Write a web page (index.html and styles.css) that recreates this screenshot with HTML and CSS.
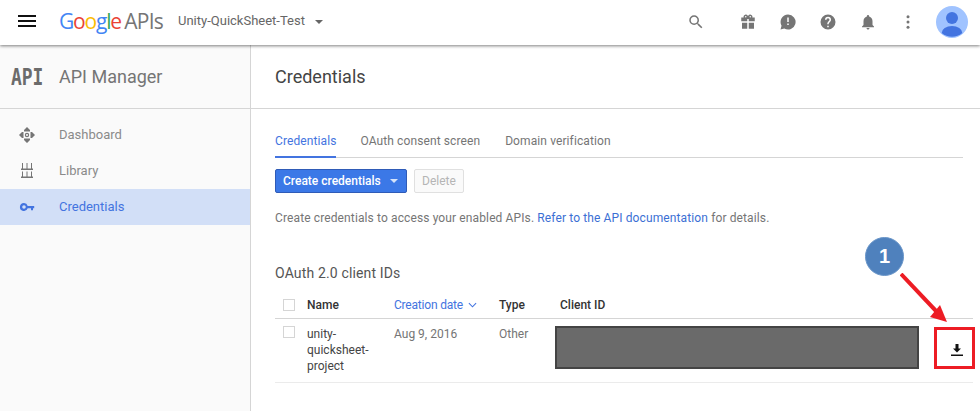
FILE: index.html
```html
<!DOCTYPE html>
<html lang="en">
  <head>
    <meta charset="UTF-8" />
    <title>Credentials - API Manager</title>
    <link rel="stylesheet" href="styles.css">
  </head>
  <body>
    <!-- Top bar -->
    <header class="topbar">
      <div class="burger"><span></span><span></span><span></span></div>
      <div class="logo">
        <span class="g-blue">G</span><span class="g-red">o</span><span class="g-yellow">o</span><span class="g-blue">g</span><span class="g-green">l</span><span class="g-red">e</span>
        <span class="logo-apis">APIs</span>
      </div>
      <div class="project">Unity-QuickSheet-Test</div>
      <div class="caret"></div>
      <div class="top-icons">
        <svg class="icon icon-search" viewBox="0 0 24 24"><path d="M15.500 14h-.79l-.28-.27A6.470 6.470 0 0 0 16 9.500 6.500 6.500 0 1 0 9.500 16c1.610 0 3.090-.59 4.230-1.570l.27.28v.79l5 4.990L20.490 19l-4.990-5zm-6 0C7.010 14 5 11.990 5 9.500S7.010 5 9.500 5 14 7.010 14 9.500 11.990 14 9.500 14z"/></svg>
        <svg class="icon icon-gift" viewBox="0 0 24 24"><path d="M20 6h-2.200c.1-.3.200-.7.200-1a3 3 0 0 0-5.500-1.600L12 4l-.5-.6A3 3 0 0 0 6 5c0 .3.100.7.200 1H3v5h8V8h2v3h8V6h-1zM9 6a1 1 0 1 1 0-2 1 1 0 0 1 0 2zm6 0a1 1 0 1 1 0-2 1 1 0 0 1 0 2zM4 13v8h7v-8H4zm9 0v8h7v-8h-7z"/></svg>
        <svg class="icon icon-feedback" viewBox="0 0 24 24"><path d="M12 2a10 10 0 0 0-8.600 15L2 22l5-1.400A10 10 0 1 0 12 2zm1 14h-2v-2h2v2zm0-4h-2V6h2v6z"/></svg>
        <svg class="icon icon-help" viewBox="0 0 24 24"><path d="M12 2a10 10 0 1 0 0 20 10 10 0 0 0 0-20zm1 17h-2v-2h2v2zm2.100-7.700-.9.900c-.7.700-1.200 1.300-1.200 2.800h-2v-.5c0-1.100.5-2.100 1.200-2.800l1.200-1.300c.4-.3.600-.8.600-1.400a2 2 0 0 0-4 0H8a4 4 0 0 1 8 0c0 .9-.4 1.700-.9 2.300z"/></svg>
        <svg class="icon icon-bell" viewBox="0 0 24 24"><path d="M12 22c1.100 0 2-.9 2-2h-4c0 1.100.9 2 2 2zm6-6v-5c0-3.100-1.600-5.600-4.500-6.300V4a1.500 1.500 0 0 0-3 0v.7C7.600 5.400 6 7.900 6 11v5l-2 2v1h16v-1l-2-2z"/></svg>
        <svg class="icon icon-more" viewBox="0 0 24 24"><circle cx="12" cy="5" r="2"/><circle cx="12" cy="12" r="2"/><circle cx="12" cy="19" r="2"/></svg>
      </div>
      <svg class="avatar" viewBox="0 0 32 32">
        <circle cx="16" cy="16" r="16" fill="#a0c3ff"/>
        <circle cx="16" cy="12" r="6" fill="#4374e0"/>
        <path d="M5.700 27a10.300 7 0 0 1 20.600 0 16 16 0 0 1-20.600 0z" fill="#4374e0"/>
      </svg>
    </header>

    <div class="page">
      <!-- Sidebar -->
      <aside class="sidebar">
        <div class="side-head">
          <div class="api-box"><span class="api-mark">API</span></div>
          <span class="side-title">API Manager</span>
        </div>
        <ul class="side-nav">
          <li>
            <svg class="nav-icon" viewBox="0 0 18 18"><path fill-rule="evenodd" d="M9 1l3 3v1.500H6V4zM9 17l-3-3v-1.500h6V14zM1 9l3-3h1.500v6H4zM17 9l-3 3h-1.500V6H14zM9 6.800a2.200 2.200 0 1 0 0 4.400 2.200 2.200 0 0 0 0-4.400zm0 1.200a1 1 0 1 1 0 2 1 1 0 0 1 0-2z"/></svg>
            <span class="nav-label">Dashboard</span>
          </li>
          <li>
            <svg class="nav-icon" viewBox="0 0 18 18"><path d="M4 1h1v5.500H4zM8.500 1h1v5.500h-1zM13 1h1v5.500h-1zM3 6.500h12V8H3zM4 9.500h1v5H4zM8.500 9.500h1v5h-1zM13 9.500h1v5h-1zM3 14.500h12V16H3z"/></svg>
            <span class="nav-label">Library</span>
          </li>
          <li class="active">
            <svg class="nav-icon" viewBox="0 0 18 18"><path fill-rule="evenodd" d="M6 5a4 4 0 1 0 3.700 5.300H13v2h2v-2h1.200V7.900H9.700A4 4 0 0 0 6 5zm0 2.200a1.800 1.800 0 1 1 0 3.600 1.800 1.800 0 0 1 0-3.600z"/></svg>
            <span class="nav-label">Credentials</span>
          </li>
        </ul>
      </aside>

      <!-- Main -->
      <main class="main">
        <h1 class="page-title">Credentials</h1>
        <div class="content">
          <nav class="tabs">
            <a class="tab tab-active">Credentials</a>
            <a class="tab">OAuth consent screen</a>
            <a class="tab tab-last">Domain verification</a>
          </nav>
          <div class="actions">
            <button class="btn btn-primary">Create credentials <i class="btn-caret"></i></button>
            <button class="btn btn-off">Delete</button>
          </div>
          <p class="intro">Create credentials to access your enabled APIs. <a>Refer to the API documentation</a> for details.</p>
          <h2 class="section-title">OAuth 2.0 client IDs</h2>
          <div class="table">
            <div class="row row-head">
              <div class="col-check"><span class="check"></span></div>
              <div class="col-name">Name</div>
              <div class="col-date sort">Creation date
                <svg class="sort-arrow" viewBox="0 0 10 6"><path d="M1 1l4 4 4-4" fill="none" stroke="#4374e0" stroke-width="1.200"/></svg>
              </div>
              <div class="col-type">Type</div>
              <div class="col-id">Client ID</div>
            </div>
            <div class="row row-body">
              <div class="col-check"><span class="check"></span></div>
              <div class="col-name">unity-quicksheet-project</div>
              <div class="col-date">Aug 9, 2016</div>
              <div class="col-type">Other</div>
              <div class="col-id"><div class="redacted"></div></div>
              <div class="col-dl">
                <svg class="dl-icon" viewBox="0 0 14 14"><path d="M11 5.500H8.500V1h-3v4.500H3L7 9.500zM1 11.500h12V13H1z"/></svg>
              </div>
            </div>
          </div>
        </div>
      </main>
    </div>

    <!-- Annotation over the screenshot -->
    <div class="callout">1</div>
    <svg class="arrow" viewBox="0 0 70 70"><path d="M1 1L37 39" stroke="#ed1c24" stroke-width="4" fill="none"/><path d="M47 49L30 44 40 32z" fill="#ed1c24"/></svg>
    <div class="red-box"></div>
  </body>
</html>
```

FILE: styles.css
```css
/* Basic Reset */
* {
  margin: 0;
  padding: 0;
  box-sizing: border-box;
}

body {
  font-family: Roboto, Arial, sans-serif;
  font-size: 13px;
  color: #757575;
  background-color: #fff;
  height: 411px;
  overflow: hidden;
  position: relative;
}

/* Top bar */
.topbar {
  height: 45px;
  padding-bottom: 4px;
  display: flex;
  align-items: center;
  background-color: #fff;
  box-shadow: 0 1px 3px rgba(0, 0, 0, 0.5);
  position: relative;
  z-index: 2;
}

.burger {
  width: 18px;
  margin-left: 18px;
  display: flex;
  flex-direction: column;
  gap: 3px;
}

.burger span {
  display: block;
  height: 2px;
  background-color: #111;
}

.logo {
  margin-left: 23px;
  font-family: "Open Sans", Arial, sans-serif;
  font-size: 21px;
  letter-spacing: -1.2px;
  white-space: nowrap;
  width: 119px;
}

.g-blue { color: #4285f4; }
.g-red { color: #ea4335; }
.g-yellow { color: #fbbc05; }
.g-green { color: #34a853; }

.logo-apis {
  color: #757575;
  letter-spacing: -0.7px;
  margin-left: -1px;
}

.project {
  color: #666;
  font-size: 13px;
  white-space: nowrap;
}

.caret {
  margin-left: 10px;
  margin-top: 2px;
  border-top: 4px solid #666;
  border-left: 4px solid transparent;
  border-right: 4px solid transparent;
}

.top-icons {
  margin-left: auto;
  margin-top: 2px;
  display: flex;
  align-items: center;
}

.icon {
  width: 18px;
  height: 18px;
  fill: #757575;
  display: block;
  margin-left: 22px;
}

.icon-search { margin-right: 12px; }

.avatar {
  width: 32px;
  height: 32px;
  margin-top: 2px;
  margin-left: 19px;
  margin-right: 12px;
}

/* Page */
.page {
  display: flex;
  height: 366px;
}

.sidebar {
  width: 251px;
  flex-shrink: 0;
  background-color: #fafafa;
  border-right: 1px solid #d5d5d5;
}

.side-head {
  height: 64px;
  display: flex;
  align-items: center;
  border-bottom: 1px solid #d5d5d5;
}

.api-box {
  width: 59px;
  padding-left: 11px;
}

.api-mark {
  display: block;
  font-family: "DejaVu Sans Mono", monospace;
  font-weight: bold;
  font-size: 23px;
  color: #6b6b6b;
  transform: scaleX(0.78);
  transform-origin: left center;
}

.side-title {
  font-size: 18px;
  color: #757575;
}

.side-nav {
  list-style: none;
  padding-top: 8px;
}

.side-nav li {
  height: 36px;
  display: flex;
  align-items: center;
  padding-left: 18px;
  color: #8a8a8a;
}

.side-nav li.active {
  background-color: #d2dff7;
  color: #4374e0;
}

.nav-label {
  margin-top: -2px;
}

.nav-icon {
  width: 18px;
  height: 18px;
  margin-right: 23px;
  fill: #757575;
}

.active .nav-icon {
  fill: #4374e0;
}

/* Main column */
.main {
  flex: 1;
}

.page-title {
  height: 64px;
  padding: 21px 0 0 24px;
  font-size: 18px;
  font-weight: 400;
  color: #444;
  border-bottom: 1px solid #d5d5d5;
}

.content {
  padding: 0 7px 0 24px;
}

.tabs {
  display: flex;
  gap: 24px;
  height: 49px;
  padding-top: 25px;
  margin-right: 10px;
  border-bottom: 1px solid #d5d5d5;
}

.tab {
  height: 24px;
  font-size: 12px;
  color: #757575;
  letter-spacing: 0.1px;
}

.tab-active {
  color: #4374e0;
  border-bottom: 2px solid #4374e0;
}

.tab-last {
  margin-left: 1px;
}

.actions {
  display: flex;
  gap: 7px;
  margin-top: 11px;
}

.btn {
  height: 24px;
  border-radius: 2px;
  font-family: inherit;
  font-size: 12px;
}

.btn-primary {
  width: 132px;
  background-color: #3b78e7;
  border: 1px solid #2f5bb7;
  color: #fff;
  font-weight: 500;
  text-align: left;
  padding-left: 7px;
}

.btn-caret {
  display: inline-block;
  margin-left: 6px;
  vertical-align: 2px;
  border-top: 4px solid #d5e3fa;
  border-left: 4px solid transparent;
  border-right: 4px solid transparent;
}

.btn-off {
  width: 50px;
  background-color: #fafafa;
  border: 1px solid #e0e0e0;
  color: #b5b5b5;
}

.intro {
  margin-top: 18px;
  font-size: 12px;
  letter-spacing: 0.12px;
  color: #757575;
}

.intro a {
  color: #3b6fd4;
}

.section-title {
  margin-top: 40px;
  font-size: 14px;
  font-weight: 400;
  letter-spacing: 0.15px;
  color: #555;
}

/* Table */
.table {
  margin-top: 11px;
  font-size: 12px;
}

.row {
  display: flex;
}

.row-head {
  height: 27px;
  align-items: center;
  border-bottom: 1px solid #d5d5d5;
  color: #333;
  font-weight: 500;
}

.row-body {
  height: 64px;
  padding-top: 7px;
  border-bottom: 1px solid #ebebeb;
  line-height: 16px;
  color: #757575;
}

.col-check {
  width: 32px;
  padding-left: 8px;
}

.check {
  display: block;
  width: 12px;
  height: 12px;
  border: 1px solid #d5d5d5;
}

.col-name {
  width: 87px;
}

.row-body .col-name {
  color: #444;
  width: 70px;
  margin-right: 17px;
}

.col-date {
  width: 105px;
}

.sort {
  color: #4374e0;
  font-weight: 400;
  letter-spacing: -0.2px;
}

.sort-arrow {
  width: 9px;
  height: 6px;
  margin-left: 2px;
  vertical-align: 1px;
}

.col-type {
  width: 56px;
}

.col-id {
  width: 375px;
}

.row-head .col-id {
  padding-left: 5px;
}

.redacted {
  width: 364px;
  height: 43px;
  background-color: #6a6a6a;
  border: 2px solid #444;
}

.col-dl {
  width: 22px;
  margin-left: 20px;
  padding-top: 17px;
}

.dl-icon {
  display: block;
  width: 14px;
  height: 14px;
  fill: #111;
}

/* Annotation */
.callout {
  position: absolute;
  left: 865px;
  top: 237px;
  width: 39px;
  height: 39px;
  border-radius: 50%;
  background-color: #4f81bd;
  border: 1px solid #6a96c9;
  color: #fff;
  font-family: "Liberation Sans", Arial, sans-serif;
  font-weight: bold;
  font-size: 20px;
  line-height: 37px;
  text-align: center;
  z-index: 3;
}

.arrow {
  position: absolute;
  left: 900px;
  top: 273px;
  width: 70px;
  height: 70px;
  z-index: 3;
}

.red-box {
  position: absolute;
  left: 934px;
  top: 327px;
  width: 41px;
  height: 42px;
  border: 3px solid #ed1c24;
  z-index: 3;
}
```
